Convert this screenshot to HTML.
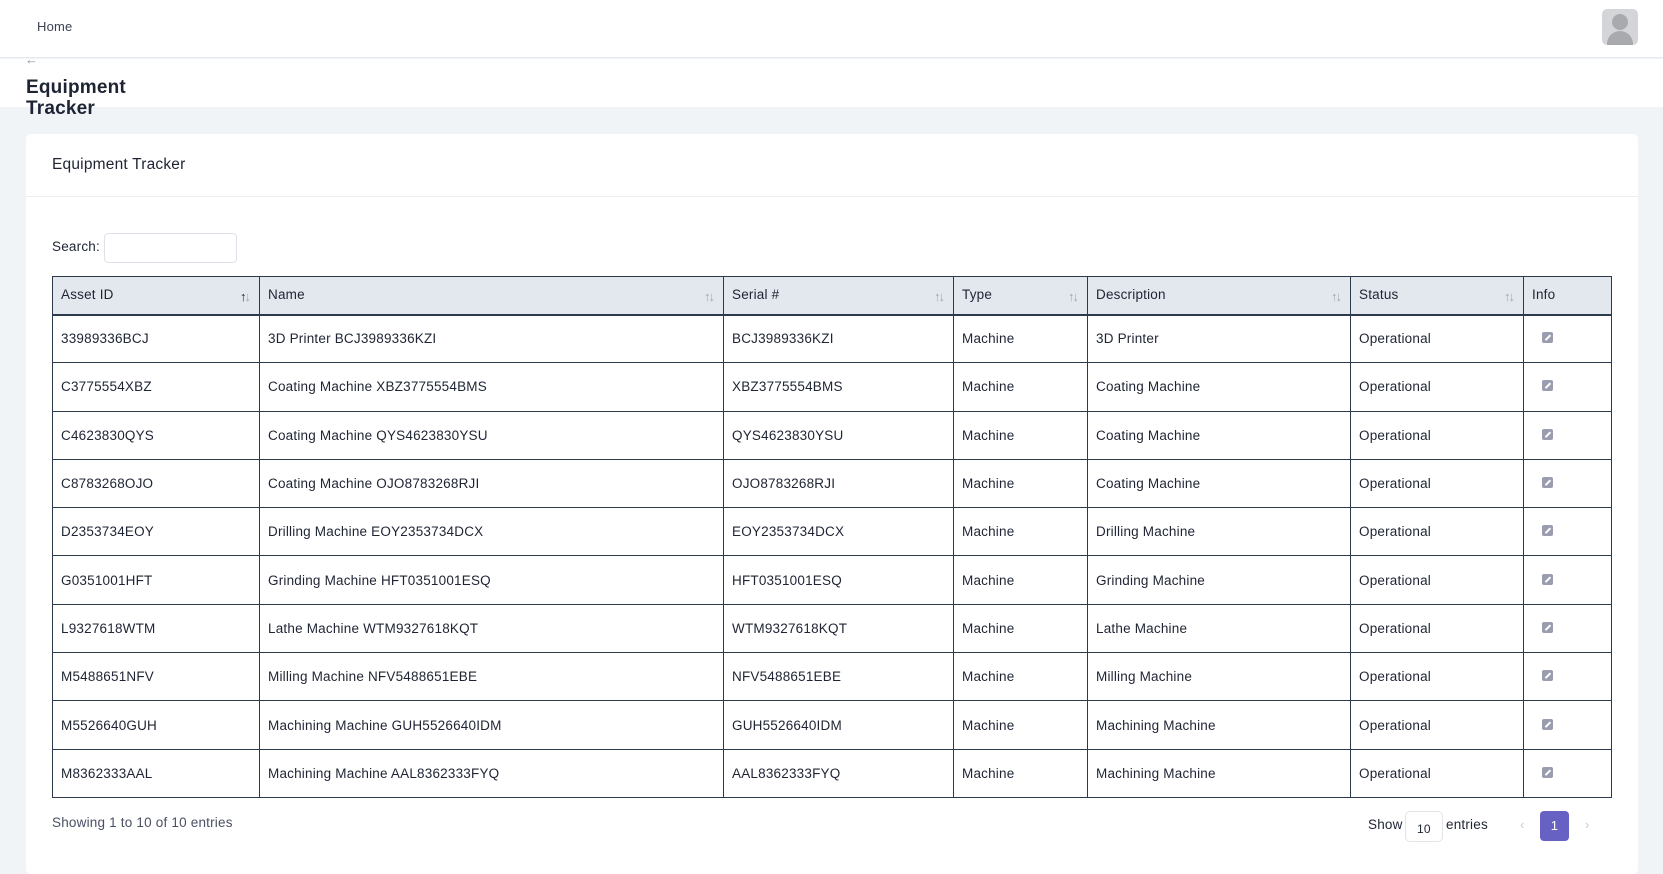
<!DOCTYPE html>
<html><head><meta charset="utf-8"><style>
*{box-sizing:border-box;margin:0;padding:0}
body{width:1663px;height:863px;overflow:hidden;background:#f1f4f7;font-family:"Liberation Sans",sans-serif;color:#1e2433;position:relative;letter-spacing:0.2px}
.top{position:absolute;left:0;top:0;width:1663px;height:58px;background:#fff;border-bottom:1px solid #e6e9ee}
.home{position:absolute;left:37px;top:19px;font-size:13px;color:#3c4256}
.av{position:absolute;left:1602px;top:9px;width:36px;height:36px;border-radius:5px;background:#d4d5d8;overflow:hidden}
.av .h{position:absolute;left:10px;top:5px;width:16px;height:16px;border-radius:50%;background:#a9aaad}
.av .b{position:absolute;left:5px;top:22px;width:26px;height:20px;border-radius:13px 13px 0 0;background:#a9aaad}
.sub{position:absolute;left:0;top:59px;width:1663px;height:48px;background:#fff}
.arrow{position:absolute;left:25px;top:52px;font-size:13px;color:#8a90a0}
.pt{position:absolute;left:26px;top:77px;font-size:19px;font-weight:bold;line-height:21px;color:#1e2433}
.card{position:absolute;left:26px;top:134px;width:1612px;height:740px;background:#fff;border-radius:5px}
.ct{position:absolute;left:26px;top:22px;font-size:15.5px;color:#1e2433}
.div{position:absolute;left:0;top:62px;width:100%;height:1px;background:#eceef2}
.sl{position:absolute;left:26px;top:105px;font-size:13.5px}
.si{position:absolute;left:78px;top:99px;width:133px;height:30px;border:1px solid #dfe2e8;border-radius:4px}
table{position:absolute;left:26px;top:142px;border-collapse:collapse;font-size:13.5px}
th,td{border:1.5px solid #2c3a4c;text-align:left;padding:0 8px;position:relative}
th{background:#e3e7ee;height:38px;font-weight:normal;vertical-align:top;padding-top:10px;border-bottom:2px solid #2c3a4c}
td{height:48.3px}
.s{position:absolute;right:10px;top:12px;font-size:13px;color:#a0a6b2;letter-spacing:-2px}
.s b{color:#1e2433;font-weight:normal}
.ic{display:inline-block;width:11px;height:11px;background:#9a9cb0;border-radius:2px;margin-left:10px;position:relative}
.ic:after{content:"";position:absolute;left:5px;top:2px;width:1.5px;height:7px;background:#fff;transform:rotate(45deg)}
.sh{position:absolute;left:26px;top:681px;font-size:13.5px;color:#4a5064}
.show{position:absolute;left:1342px;top:683px;font-size:13.5px}
.ni{position:absolute;left:1379px;top:677px;width:38px;height:31px;border:1px solid #e2e4ea;border-radius:5px;font-size:12px;padding:10px 0 0 11px}
.en{position:absolute;left:1420px;top:683px;font-size:13.5px}
.pv{position:absolute;left:1494px;top:683px;color:#c8ccd4;font-size:13px}
.pg{position:absolute;left:1514px;top:677px;width:29px;height:30px;background:#6761c4;border-radius:4px;color:#fff;font-size:13px;text-align:center;line-height:30px}
.nx{position:absolute;left:1559px;top:683px;color:#c8ccd4;font-size:13px}
</style></head><body>
<div class="top"><div class="home">Home</div><div class="av"><div class="h"></div><div class="b"></div></div></div>
<div class="sub"></div>
<div class="arrow">←</div>
<div class="pt">Equipment<br>Tracker</div>
<div class="card">
<div class="ct">Equipment Tracker</div><div class="div"></div>
<div class="sl">Search:</div><div class="si"></div>
<table>
<tr><th style="width:207px">Asset ID<span class="s"><b>↑</b>↓</span></th><th style="width:464px">Name<span class="s">↑↓</span></th><th style="width:230px">Serial #<span class="s">↑↓</span></th><th style="width:134px">Type<span class="s">↑↓</span></th><th style="width:263px">Description<span class="s">↑↓</span></th><th style="width:173px">Status<span class="s">↑↓</span></th><th style="width:88px">Info</th></tr>
<tr><td>33989336BCJ</td><td>3D Printer BCJ3989336KZI</td><td>BCJ3989336KZI</td><td>Machine</td><td>3D Printer</td><td>Operational</td><td><span class="ic"></span></td></tr>
<tr><td>C3775554XBZ</td><td>Coating Machine XBZ3775554BMS</td><td>XBZ3775554BMS</td><td>Machine</td><td>Coating Machine</td><td>Operational</td><td><span class="ic"></span></td></tr>
<tr><td>C4623830QYS</td><td>Coating Machine QYS4623830YSU</td><td>QYS4623830YSU</td><td>Machine</td><td>Coating Machine</td><td>Operational</td><td><span class="ic"></span></td></tr>
<tr><td>C8783268OJO</td><td>Coating Machine OJO8783268RJI</td><td>OJO8783268RJI</td><td>Machine</td><td>Coating Machine</td><td>Operational</td><td><span class="ic"></span></td></tr>
<tr><td>D2353734EOY</td><td>Drilling Machine EOY2353734DCX</td><td>EOY2353734DCX</td><td>Machine</td><td>Drilling Machine</td><td>Operational</td><td><span class="ic"></span></td></tr>
<tr><td>G0351001HFT</td><td>Grinding Machine HFT0351001ESQ</td><td>HFT0351001ESQ</td><td>Machine</td><td>Grinding Machine</td><td>Operational</td><td><span class="ic"></span></td></tr>
<tr><td>L9327618WTM</td><td>Lathe Machine WTM9327618KQT</td><td>WTM9327618KQT</td><td>Machine</td><td>Lathe Machine</td><td>Operational</td><td><span class="ic"></span></td></tr>
<tr><td>M5488651NFV</td><td>Milling Machine NFV5488651EBE</td><td>NFV5488651EBE</td><td>Machine</td><td>Milling Machine</td><td>Operational</td><td><span class="ic"></span></td></tr>
<tr><td>M5526640GUH</td><td>Machining Machine GUH5526640IDM</td><td>GUH5526640IDM</td><td>Machine</td><td>Machining Machine</td><td>Operational</td><td><span class="ic"></span></td></tr>
<tr><td>M8362333AAL</td><td>Machining Machine AAL8362333FYQ</td><td>AAL8362333FYQ</td><td>Machine</td><td>Machining Machine</td><td>Operational</td><td><span class="ic"></span></td></tr>
</table>
<div class="sh">Showing 1 to 10 of 10 entries</div>
<div class="show">Show</div><div class="ni">10</div><div class="en">entries</div>
<div class="pv">‹</div><div class="pg">1</div><div class="nx">›</div>
</div>
</body></html>
